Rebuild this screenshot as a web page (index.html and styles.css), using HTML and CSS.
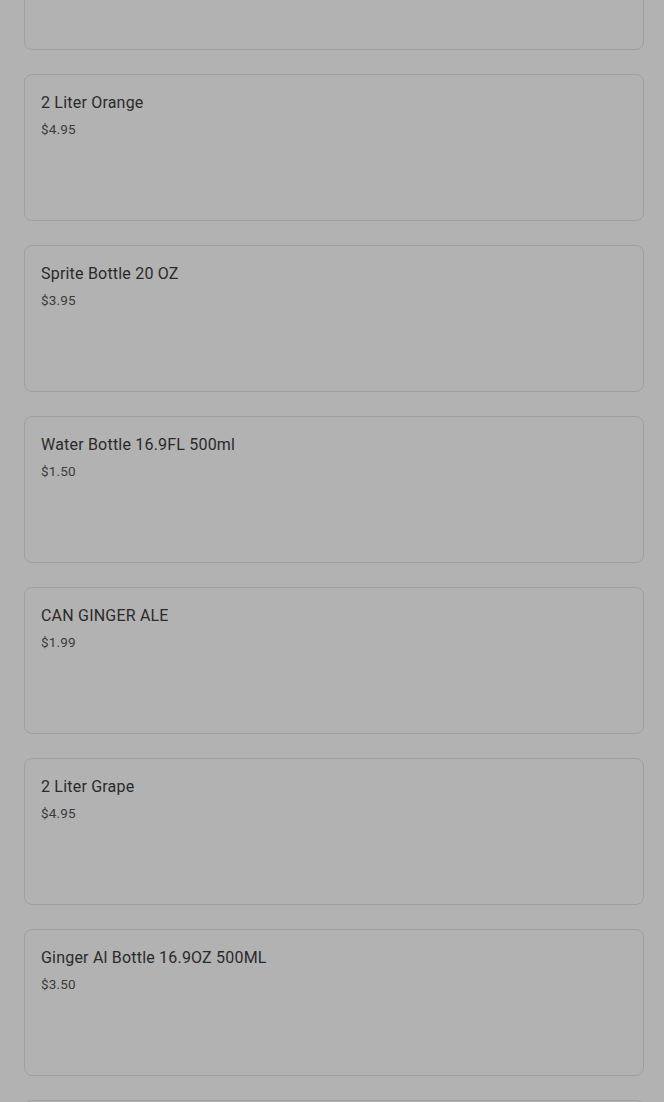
FILE: index.html
```html
<!DOCTYPE html>
<html>
<head>
    <meta charset="utf-8">
    <link rel="stylesheet" href="styles.css">
</head>
<body>
<div class="menu">
    <div class="item">
        <div class="item-name">2 Liter Coke</div>
        <div class="item-price">$4.95</div>
    </div>
    <div class="item">
        <div class="item-name">2 Liter Orange</div>
        <div class="item-price">$4.95</div>
    </div>
    <div class="item">
        <div class="item-name">Sprite Bottle 20 OZ</div>
        <div class="item-price">$3.95</div>
    </div>
    <div class="item">
        <div class="item-name">Water Bottle 16.9FL 500ml</div>
        <div class="item-price">$1.50</div>
    </div>
    <div class="item">
        <div class="item-name">CAN GINGER ALE</div>
        <div class="item-price">$1.99</div>
    </div>
    <div class="item">
        <div class="item-name">2 Liter Grape</div>
        <div class="item-price">$4.95</div>
    </div>
    <div class="item">
        <div class="item-name">Ginger Al Bottle 16.9OZ 500ML</div>
        <div class="item-price">$3.50</div>
    </div>
    <div class="item">
        <div class="item-name">Diet Coke Bottle 20 OZ</div>
        <div class="item-price">$3.95</div>
    </div>
</div>
<div class="backdrop"></div>
</body>
</html>
```

FILE: styles.css
```css
html, body {
    margin: 0;
    padding: 0;
    background-color: #fff;
    font-family: Roboto, "Liberation Sans", Arial, sans-serif;
    overflow: hidden;
}

.menu {
    display: flex;
    flex-direction: column;
    gap: 24px;
    padding: 0 20px 0 24px;
    margin-top: -97px;
}

.item {
    box-sizing: border-box;
    height: 147px;
    border: 1px solid #e4e4e4;
    border-radius: 8px;
    padding: 16px 16px;
    background-color: #fff;
}

.item-name {
    font-size: 16px;
    line-height: 24px;
    letter-spacing: 0.2px;
    color: #3d3d3d;
}

.item-price {
    margin-top: 4px;
    font-size: 13.5px;
    line-height: 20px;
    letter-spacing: 0.2px;
    color: #575757;
}

.backdrop {
    position: fixed;
    top: 0;
    left: 0;
    right: 0;
    bottom: 0;
    background-color: rgba(0, 0, 0, 0.3);
}
```
